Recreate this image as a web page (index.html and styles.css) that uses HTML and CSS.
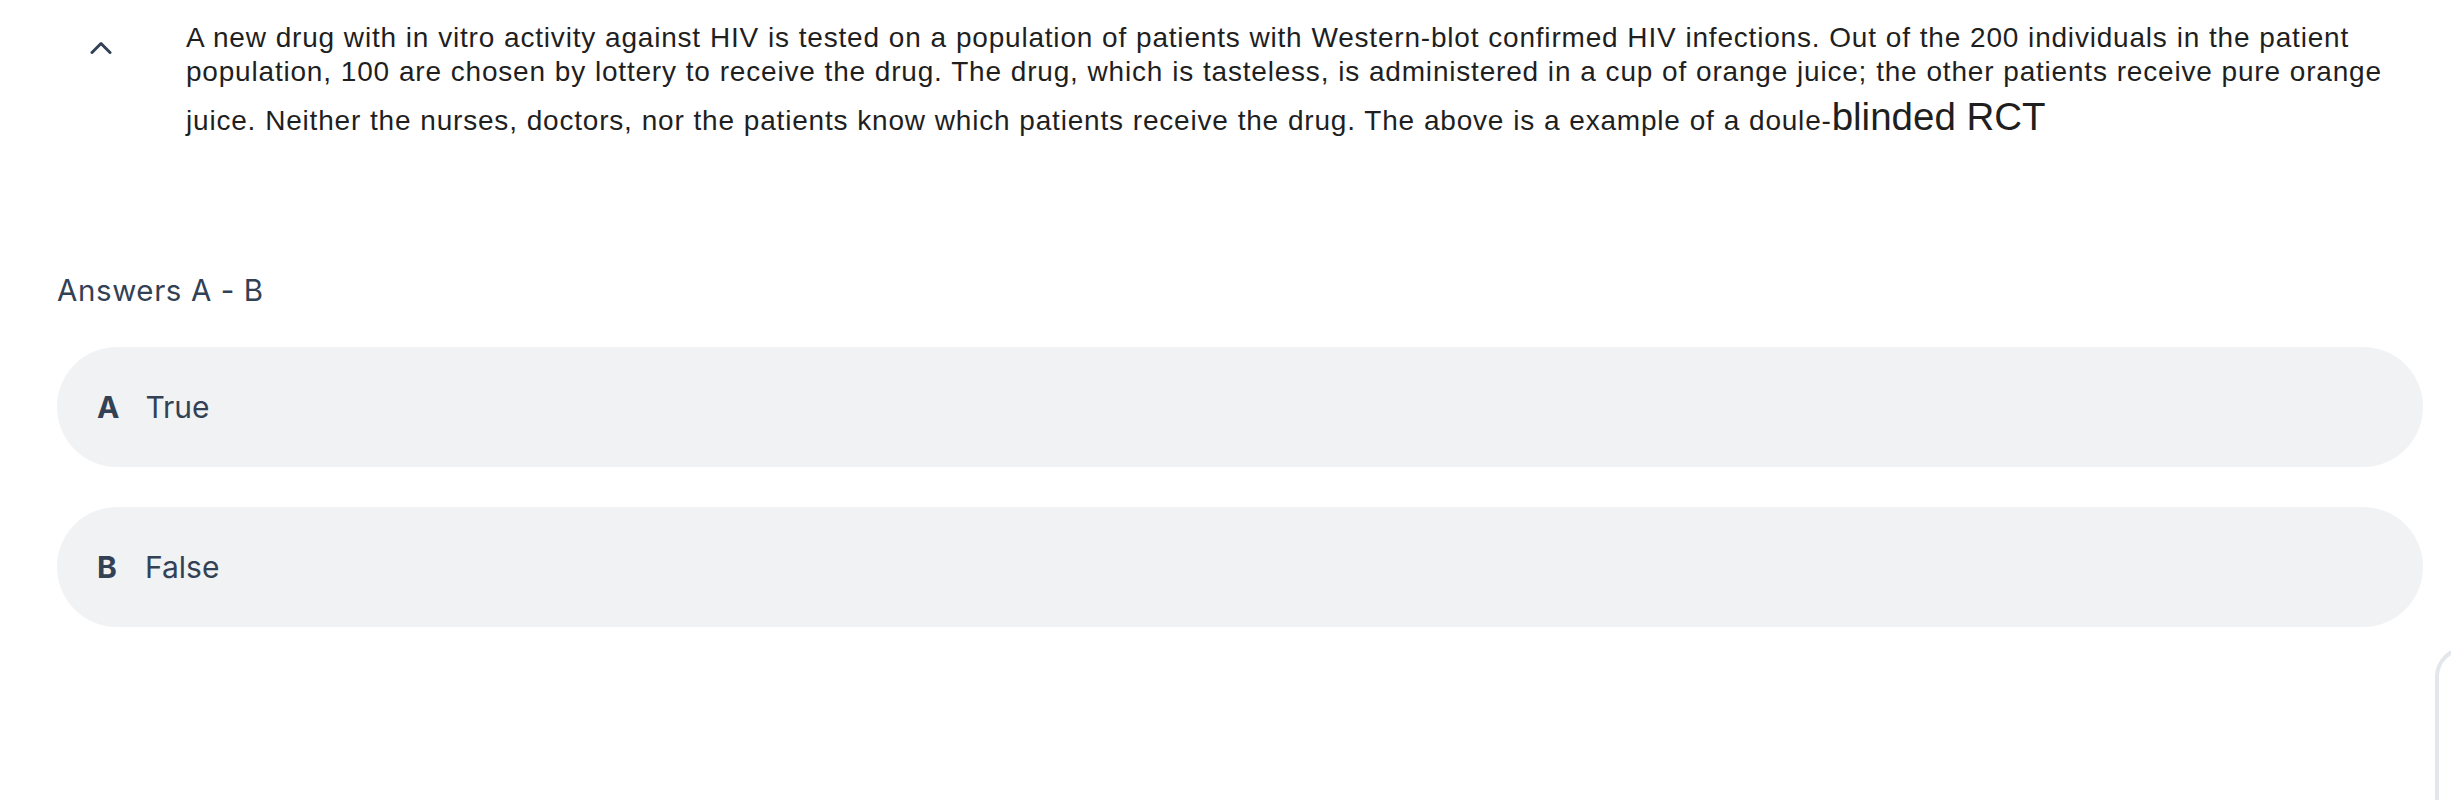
FILE: index.html
```html
<!DOCTYPE html>
<html lang="en">
<head>
<meta charset="utf-8">
<title>Question</title>
<link rel="stylesheet" href="styles.css">
</head>
<body>
<main class="page">
  <section class="question">
    <div class="toggle">
      <svg class="chevron" width="22" height="13" viewBox="0 0 22 13" aria-hidden="true">
        <polyline points="2,11.5 11,2.5 20,11.5" fill="none" stroke="#334155" stroke-width="3" stroke-linecap="round" stroke-linejoin="round"/>
      </svg>
    </div>
    <p class="question-text">A new drug with in vitro activity against HIV is tested on a population of patients with Western-blot confirmed HIV infections. Out of the 200 individuals in the patient population, 100 are chosen by lottery to receive the drug. The drug, which is tasteless, is administered in a cup of orange juice; the other patients receive pure orange juice. Neither the nurses, doctors, nor the patients know which patients receive the drug. The above is a example of a doule-<span class="big">blinded RCT</span></p>
  </section>

  <h2 class="answers-title">Answers A - B</h2>

  <ul class="answers">
    <li class="answer"><span class="letter">A</span><span class="label">True</span></li>
    <li class="answer"><span class="letter">B</span><span class="label">False</span></li>
  </ul>
</main>
<div class="side-tab"></div>
</body>
</html>
```

FILE: styles.css
```css
html, body {
  margin: 0;
  padding: 0;
  background: #ffffff;
}

body {
  width: 2451px;
  height: 800px;
  overflow: hidden;
  position: relative;
  font-family: "Inter", "Liberation Sans", Arial, sans-serif;
}

.page {
  padding: 0 28px 0 57px;
}

.question {
  display: flex;
  align-items: flex-start;
  padding-top: 21px;
}

.toggle {
  width: 129px;
  flex: none;
  padding-left: 33px;
  padding-top: 20px;
  box-sizing: border-box;
}

.chevron {
  display: block;
}

.question-text {
  flex: 1;
  margin: 0;
  font-family: "Liberation Sans", Arial, Helvetica, sans-serif;
  font-size: 28px;
  letter-spacing: 0.8px;
  word-spacing: 0.4px;
  line-height: 34px;
  color: #1f1f1f;
}

.big {
  font-size: 38.5px;
  letter-spacing: 0;
  word-spacing: 0;
  line-height: 55px;
}

.answers-title {
  margin: 129px 0 0 0;
  font-family: "Inter", sans-serif;
  font-weight: 400;
  font-size: 29.5px;
  letter-spacing: 0.6px;
  line-height: 34px;
  color: #334155;
}

.answers {
  list-style: none;
  margin: 40px 0 0 0;
  padding: 0;
  display: flex;
  flex-direction: column;
  gap: 40px;
}

.answer {
  height: 120px;
  border-radius: 60px;
  background: #f1f2f4;
  display: flex;
  align-items: center;
  padding-left: 40px;
  gap: 26px;
  font-family: "Inter", sans-serif;
  font-size: 30px;
  color: #334155;
}

.letter {
  font-weight: 700;
  min-width: 22px;
}

.label {
  font-weight: 400;
}

.side-tab {
  position: absolute;
  left: 2435px;
  top: 647px;
  width: 80px;
  height: 220px;
  border: 4px solid #e3e6ea;
  border-radius: 30px;
  box-sizing: border-box;
}
```
